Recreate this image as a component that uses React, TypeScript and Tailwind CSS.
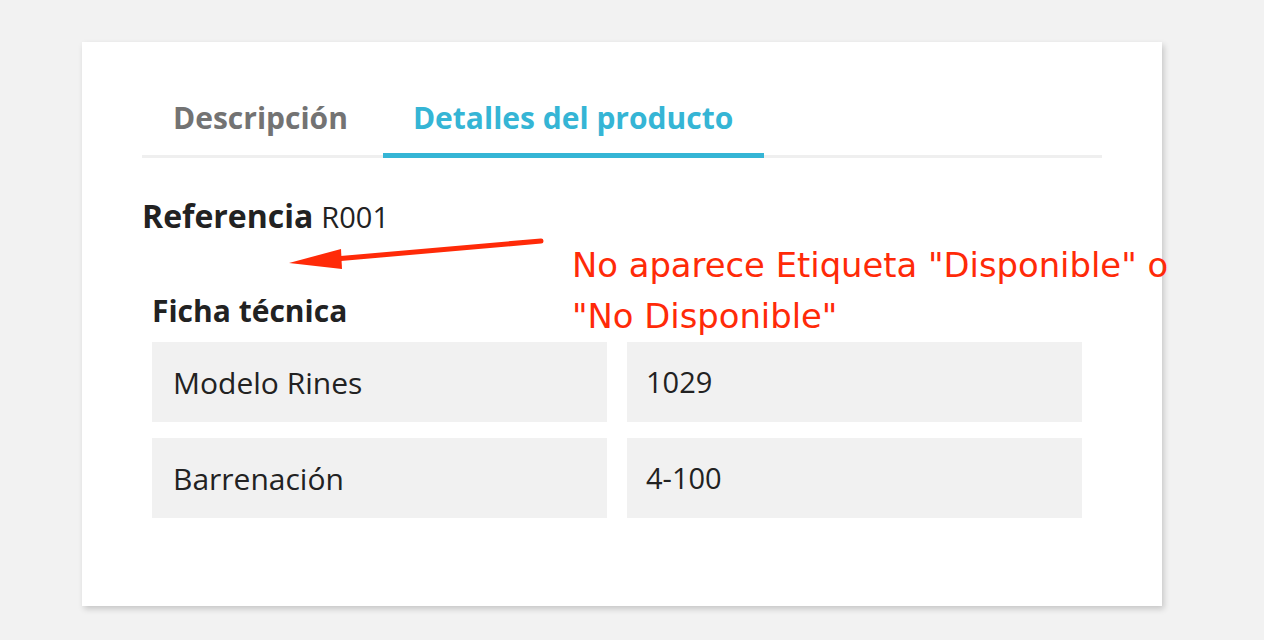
import React from "react";

const specs = [
  { label: "Modelo Rines", value: "1029" },
  { label: "Barrenación", value: "4-100" },
];

export default function App() {
  return (
    <div
      className="relative h-[640px] w-[1264px] overflow-hidden bg-[#f2f2f2] pt-[42px] pl-[82px]"
      style={{ fontFamily: '"Open Sans", sans-serif' }}
    >
      <div className="h-[564px] w-[1080px] bg-white px-[60px] pt-[56px] shadow-[2px_3px_6px_rgba(0,0,0,0.18)]">
        {/* tabs */}
        <div className="flex border-b-[3px] border-[#efefef]">
          <div className="mr-[4px] pl-[31px] pr-[31px] pb-[17px] text-[30px] font-bold leading-[40px] text-[#737373]">
            Descripción
          </div>
          <div className="-mb-[3px] border-b-[5px] border-[#35b5d5] pl-[30px] pr-[31px] pb-[15px] text-[30px] font-bold leading-[40px] text-[#35b5d5]">
            Detalles del producto
          </div>
        </div>

        <div className="mt-[38px] flex items-baseline gap-[8px] leading-[40px] text-[#222]">
          <span className="text-[32px] font-bold">Referencia</span>
          <span className="text-[29px]">R001</span>
        </div>

        <div className="ml-[10px] mr-[20px] mt-[54px]">
          <div className="text-[30px] font-bold leading-[40px] text-[#222]">
            Ficha técnica
          </div>
          <div className="mt-[11px] grid grid-cols-2 gap-x-5 gap-y-4">
            {specs.map((s) => (
              <React.Fragment key={s.label}>
                <div className="flex h-20 items-center bg-[#f1f1f1] px-[21px] text-[30px] text-[#222]">
                  {s.label}
                </div>
                <div className="flex h-20 items-center bg-[#f1f1f1] px-[19px] text-[29px] text-[#222]">
                  {s.value}
                </div>
              </React.Fragment>
            ))}
          </div>
        </div>
      </div>

      {/* annotation */}
      <svg
        className="pointer-events-none absolute left-0 top-0"
        width="1264"
        height="640"
      >
        <line
          x1="541"
          y1="241"
          x2="335"
          y2="259"
          stroke="#ff2a08"
          strokeWidth="5"
          strokeLinecap="round"
        />
        <polygon points="289,263 341,249 342,269" fill="#ff2a08" />
      </svg>
      <div
        className="absolute left-[572px] top-[240px] text-[33.8px] leading-[51px] text-[#ff2a08]"
        style={{ fontFamily: '"DejaVu Sans", Verdana, sans-serif' }}
      >
        <div>No aparece Etiqueta "Disponible" o</div>
        <div>"No Disponible"</div>
      </div>
    </div>
  );
}
